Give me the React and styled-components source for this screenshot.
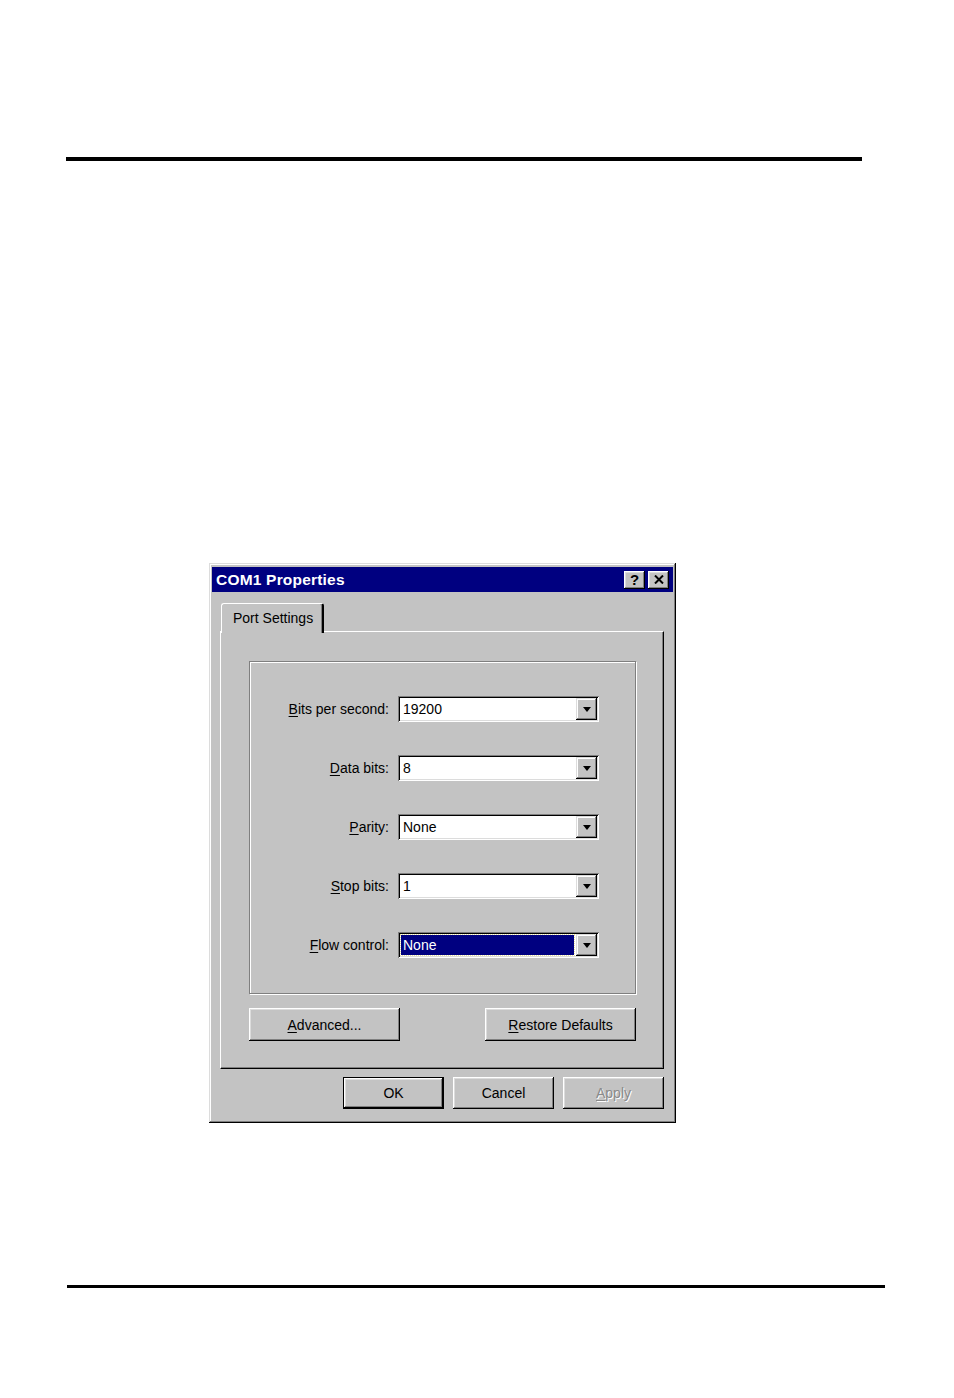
import React from 'react';
import styled, { createGlobalStyle } from 'styled-components';

const GlobalStyle = createGlobalStyle`
  html, body {
    margin: 0;
    padding: 0;
    background: #ffffff;
  }
  body {
    font-family: "Liberation Sans", Arial, sans-serif;
  }
`;

const Page = styled.div`
  width: 954px;
  height: 1398px;
  box-sizing: border-box;
  padding-top: 157px;
  background: #ffffff;
  overflow: hidden;
`;

const Rule = styled.div`
  margin-left: ${(p) => p.left}px;
  margin-top: ${(p) => p.top || 0}px;
  width: ${(p) => p.width}px;
  height: ${(p) => p.thick}px;
  background: #000000;
`;

const DialogSlot = styled.div`
  margin: ${(p) => p.top}px 0 0 209px;
`;

const Dialog = styled.div`
  width: 467px;
  height: 560px;
  box-sizing: border-box;
  padding: 4px 3px;
  background: #c3c3c3;
  box-shadow: inset -1px -1px #000000, inset 1px 1px #dcdcdc,
    inset -2px -2px #7f7f7f, inset 2px 2px #ffffff;
  font-family: "Liberation Sans", Arial, sans-serif;
  font-size: 14px;
  color: #000000;
`;

const TitleBar = styled.div`
  height: 25px;
  background: #000080;
  display: flex;
  align-items: center;
  justify-content: space-between;
  padding: 0 4px 0 4px;
`;

const TitleText = styled.span`
  color: #ffffff;
  font-weight: bold;
  font-size: 15.5px;
  letter-spacing: 0.2px;
`;

const TitleButtons = styled.div`
  display: flex;
  gap: 3px;
`;

const CaptionButton = styled.div`
  width: 21px;
  height: 18px;
  box-sizing: border-box;
  background: #c3c3c3;
  box-shadow: inset -1px -1px #000000, inset 1px 1px #ffffff,
    inset -2px -2px #7f7f7f, inset 2px 2px #dcdcdc;
  display: flex;
  align-items: center;
  justify-content: center;
  font-weight: bold;
  font-size: 15px;
  line-height: 1;
  padding-bottom: 1px;
`;

const Content = styled.div`
  padding: 11px 9px 0 8px;
`;

const TabStrip = styled.div`
  display: flex;
  padding-left: 1px;
  height: 29px;
  position: relative;
  z-index: 1;
  margin-bottom: -1px;
`;

const Tab = styled.div`
  width: 103px;
  height: 30px;
  box-sizing: border-box;
  padding: 6px 0 0 11px;
  background: #c3c3c3;
  border-top-left-radius: 3px;
  border-top-right-radius: 3px;
  border-top: 1px solid #ffffff;
  border-left: 1px solid #ffffff;
  border-right: 2px solid #000000;
  box-shadow: inset -1px 0 #7f7f7f;
  white-space: nowrap;
`;

const Panel = styled.div`
  height: 438px;
  box-sizing: border-box;
  padding: 29px 27px 0 28px;
  border-top: 1px solid #ffffff;
  border-left: 1px solid #ffffff;
  border-right: 1px solid #000000;
  border-bottom: 1px solid #000000;
  box-shadow: inset -1px -1px #7f7f7f;
`;

const GroupBox = styled.div`
  height: 333px;
  box-sizing: border-box;
  padding: 34px 0 0 0;
  border: 1px solid #7f7f7f;
  box-shadow: 1px 1px #ffffff, inset 1px 1px #ffffff;
  display: flex;
  flex-direction: column;
  gap: 33px;
`;

const Row = styled.div`
  display: grid;
  grid-template-columns: 139px 201px;
  column-gap: 9px;
  align-items: center;
`;

const Label = styled.span`
  text-align: right;
  white-space: nowrap;
`;

const Key = styled.span`
  text-decoration: underline;
  text-underline-offset: 2px;
`;

const Combo = styled.div`
  height: 26px;
  box-sizing: border-box;
  padding: 2px;
  background: #ffffff;
  box-shadow: inset 1px 1px #7f7f7f, inset -1px -1px #ffffff,
    inset 2px 2px #000000, inset -2px -2px #dcdcdc;
  display: flex;
  align-items: stretch;
`;

const ComboValue = styled.div`
  flex: 1;
  display: flex;
  align-items: center;
  margin: 1px 2px 1px 1px;
  padding-left: 2px;
  background: ${(p) => (p.selected ? '#000080' : 'transparent')};
  color: ${(p) => (p.selected ? '#ffffff' : '#000000')};
  outline: ${(p) => (p.selected ? '1px dotted #e8e0a0' : 'none')};
`;

const DropButton = styled.div`
  width: 21px;
  background: #c3c3c3;
  box-shadow: inset -1px -1px #000000, inset 1px 1px #dcdcdc,
    inset -2px -2px #7f7f7f, inset 2px 2px #ffffff;
  display: flex;
  align-items: center;
  justify-content: center;
`;

const Arrow = styled.div`
  width: 0;
  height: 0;
  border-left: 4px solid transparent;
  border-right: 4px solid transparent;
  border-top: 5px solid #000000;
`;

const ButtonRow = styled.div`
  display: flex;
  justify-content: ${(p) => p.justify || 'space-between'};
  gap: ${(p) => p.gap || 0}px;
  margin-top: ${(p) => p.top}px;
`;

const Button = styled.div`
  width: ${(p) => p.width}px;
  height: ${(p) => p.height}px;
  box-sizing: border-box;
  background: #c3c3c3;
  display: flex;
  align-items: center;
  justify-content: center;
  box-shadow: ${(p) =>
    p.primary
      ? 'inset 0 0 0 1px #000000, inset -2px -2px #000000, inset 2px 2px #ffffff, inset -3px -3px #7f7f7f, inset 3px 3px #dcdcdc'
      : 'inset -1px -1px #000000, inset 1px 1px #ffffff, inset -2px -2px #7f7f7f, inset 2px 2px #dcdcdc'};
  color: ${(p) => (p.disabled ? '#8a8a8a' : '#000000')};
  text-shadow: ${(p) => (p.disabled ? '1px 1px #ffffff' : 'none')};
  white-space: nowrap;
`;

const CloseIcon = () => (
  <svg width="10" height="9" viewBox="0 0 10 9">
    <path d="M1 0.5 L9 8.5 M9 0.5 L1 8.5" stroke="#000" strokeWidth="2" />
  </svg>
);

const fields = [
  { key: 'B', rest: 'its per second:', value: '19200' },
  { key: 'D', rest: 'ata bits:', value: '8' },
  { key: 'P', rest: 'arity:', value: 'None' },
  { key: 'S', rest: 'top bits:', value: '1' },
  { key: 'F', rest: 'low control:', value: 'None', selected: true },
];

const App = () => (
  <Page>
    <GlobalStyle />
    <Rule left={66} width={796} thick={4} />

    <DialogSlot top={402}>
      <Dialog>
        <TitleBar>
          <TitleText>COM1 Properties</TitleText>
          <TitleButtons>
            <CaptionButton>?</CaptionButton>
            <CaptionButton>
              <CloseIcon />
            </CaptionButton>
          </TitleButtons>
        </TitleBar>

        <Content>
          <TabStrip>
            <Tab>Port Settings</Tab>
          </TabStrip>
          <Panel>
            <GroupBox>
              {fields.map((f) => (
                <Row key={f.key}>
                  <Label>
                    <Key>{f.key}</Key>
                    {f.rest}
                  </Label>
                  <Combo>
                    <ComboValue selected={f.selected}>{f.value}</ComboValue>
                    <DropButton>
                      <Arrow />
                    </DropButton>
                  </Combo>
                </Row>
              ))}
            </GroupBox>

            <ButtonRow top={14}>
              <Button width={151} height={33}>
                <Key>A</Key>dvanced...
              </Button>
              <Button width={151} height={33}>
                <Key>R</Key>estore Defaults
              </Button>
            </ButtonRow>
          </Panel>

          <ButtonRow top={8} justify="flex-end" gap={9}>
            <Button width={101} height={32} primary>
              OK
            </Button>
            <Button width={101} height={32}>
              Cancel
            </Button>
            <Button width={101} height={32} disabled>
              <Key>A</Key>pply
            </Button>
          </ButtonRow>
        </Content>
      </Dialog>
    </DialogSlot>

    <Rule left={67} top={162} width={818} thick={3} />
  </Page>
);

export default App;
